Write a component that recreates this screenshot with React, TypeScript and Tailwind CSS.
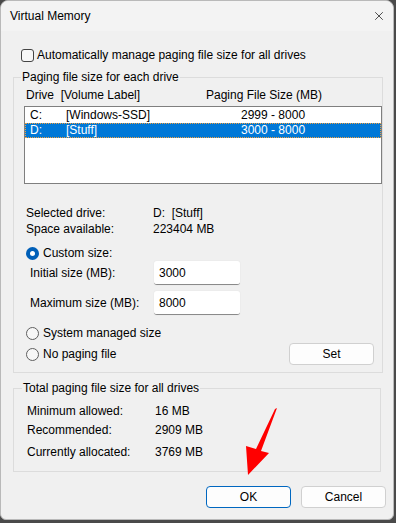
import { X } from "lucide-react";

const FONT = "[font-family:'Liberation_Sans','Noto_Sans',sans-serif]";

function Radio({ checked, label }: { checked?: boolean; label: string }) {
  return (
    <div className="flex h-4 items-center gap-[4px]">
      {checked ? (
        <span className="flex h-[13px] w-[13px] items-center justify-center rounded-full bg-[#005fb8]">
          <span className="h-[5px] w-[5px] rounded-full bg-white" />
        </span>
      ) : (
        <span className="h-[13px] w-[13px] rounded-full border border-[#5f5f5f] bg-[#f7f7f7]" />
      )}
      <span>{label}</span>
    </div>
  );
}

function Field({ label, value }: { label: string; value: string }) {
  return (
    <div className="flex h-6 items-center">
      <span className="w-[128px] pl-[4px]">{label}</span>
      <div className="flex h-6 w-[86px] items-center rounded-[3px] border-b border-b-[#8a8a8a] bg-white pl-[5px] shadow-[0_0_0_1px_#ececec]">
        {value}
      </div>
    </div>
  );
}

const rows = [
  { drive: "C:", label: "[Windows-SSD]", size: "2999 - 8000" },
  { drive: "D:", label: "[Stuff]", size: "3000 - 8000", selected: true },
];

export default function App() {
  return (
    <div className={`relative h-[523px] w-[396px] bg-[#4a4a4a] text-[12px] leading-4 text-[#000] ${FONT}`}>
      <div className="flex h-[520px] w-[394px] flex-col rounded-t-[8px] rounded-b-[6px] border border-[#b9b9b9] bg-[#f0f0f0]">
        {/* title bar */}
        <div className="flex h-[30px] items-center justify-between rounded-t-[8px] bg-[#f3f3f3] pl-[9px] pr-[7px]">
          <span>Virtual Memory</span>
          <X className="h-[14px] w-[14px] text-[#1a1a1a]" strokeWidth={1.3} />
        </div>

        <div className="flex flex-col px-[12px]">
          <label className="mt-[16px] flex h-4 items-center gap-[3px] pl-[8px]">
            <span className="h-[13px] w-[13px] rounded-[3px] border border-[#444] bg-[#f7f7f7]" />
            <span>Automatically manage paging file size for all drives</span>
          </label>

          <fieldset className="mt-[6px] border border-[#dcdcdc] pb-[7px]">
            <legend className="ml-[7px] px-[1px]">Paging file size for each drive</legend>
            <div className="mt-[2px] flex h-4 pl-[12px]">
              <span className="w-[180px]">Drive&nbsp;&nbsp;[Volume Label]</span>
              <span>Paging File Size (MB)</span>
            </div>
            <div className="ml-[10px] mt-[3px] h-[78px] w-[358px] border border-[#7f7f7f] bg-white pt-[1px]">
              {rows.map((r) => (
                <div
                  key={r.drive}
                  className={`flex h-[15px] items-center pl-[4px] leading-[13px] ${
                    r.selected ? "border border-dotted border-[#f0a040] bg-[#0078d7] text-white" : "border border-transparent"
                  }`}
                >
                  <span className="w-[36px]">{r.drive}</span>
                  <span className="w-[175px]">{r.label}</span>
                  <span>{r.size}</span>
                </div>
              ))}
            </div>

            <div className="ml-[12px] mt-[21px] flex flex-col">
              <div className="flex h-4">
                <span className="w-[127px]">Selected drive:</span>
                <span>D:&nbsp;&nbsp;[Stuff]</span>
              </div>
              <div className="flex h-4">
                <span className="w-[127px]">Space available:</span>
                <span>223404 MB</span>
              </div>
              <div className="mt-[8px]">
                <Radio checked label="Custom size:" />
              </div>
              <Field label="Initial size (MB):" value="3000" />
              <div className="mt-[6px]">
                <Field label="Maximum size (MB):" value="8000" />
              </div>
              <div className="mt-[10px]">
                <Radio label="System managed size" />
              </div>
              <div className="mt-[2px] flex h-[22px] items-center justify-between pr-[8px]">
                <Radio label="No paging file" />
                <button className="h-[22px] w-[85px] rounded-[4px] border border-[#d0d0d0] bg-[#fdfdfd]">Set</button>
              </div>
            </div>
          </fieldset>

          <fieldset className="mt-[7px] border border-[#dcdcdc] pb-[11px]">
            <legend className="ml-[8px] px-[1px]">Total paging file size for all drives</legend>
            <div className="ml-[13px] mt-[7px] flex flex-col">
              <div className="flex h-4">
                <span className="w-[128px]">Minimum allowed:</span>
                <span>16 MB</span>
              </div>
              <div className="mt-[3px] flex h-4">
                <span className="w-[128px]">Recommended:</span>
                <span>2909 MB</span>
              </div>
              <div className="mt-[6px] flex h-4">
                <span className="w-[128px]">Currently allocated:</span>
                <span>3769 MB</span>
              </div>
            </div>
          </fieldset>

          <div className="-mr-[5px] mt-[14px] flex justify-end gap-[10px]">
            <button className="h-[22px] w-[85px] rounded-[4px] border border-[#0067c0] bg-[#fdfdfd]">OK</button>
            <button className="h-[22px] w-[85px] rounded-[4px] border border-[#d0d0d0] bg-[#fdfdfd]">Cancel</button>
          </div>
        </div>
      </div>

      {/* annotation arrow */}
      <svg className="pointer-events-none absolute left-0 top-0" width="396" height="523" viewBox="0 0 396 523">
        <polygon points="277,408 275,409 256,449 246,446 248,475 269,453 261,451" fill="#ff0000" />
      </svg>
    </div>
  );
}
